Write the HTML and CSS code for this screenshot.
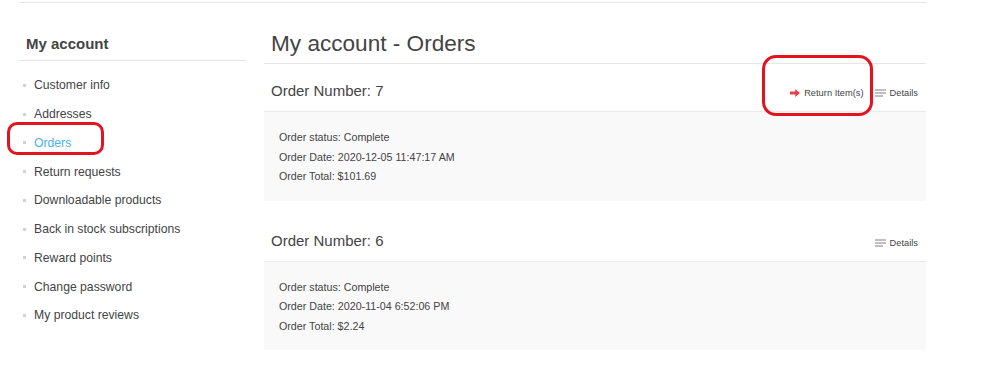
FILE: index.html
```html
<!DOCTYPE html>
<html lang="en">
<head>
    <meta charset="UTF-8">
    <title>My account - Orders</title>
    <link rel="stylesheet" href="styles.css">
</head>
<body>
    <div class="page">
        <div class="columns">
            <div class="side">
                <div class="side-title">My account</div>
                <ul class="side-list">
                    <li><a href="#">Customer info</a></li>
                    <li><a href="#">Addresses</a></li>
                    <li class="active"><a href="#">Orders</a></li>
                    <li><a href="#">Return requests</a></li>
                    <li><a href="#">Downloadable products</a></li>
                    <li><a href="#">Back in stock subscriptions</a></li>
                    <li><a href="#">Reward points</a></li>
                    <li><a href="#">Change password</a></li>
                    <li><a href="#">My product reviews</a></li>
                </ul>
            </div>
            <div class="main">
                <h1 class="page-title">My account - Orders</h1>

                <div class="order">
                    <div class="order-head">
                        <span class="order-num">Order Number: 7</span>
                        <div class="order-links">
                            <a href="#" class="return-link">
                                <svg width="10" height="8" viewBox="0 0 10 8"><path d="M0 2.6h5.2V0L10 4 5.2 8V5.4H0z" fill="#e8414a"/></svg>
                                Return Item(s)
                            </a>
                            <a href="#" class="details-link">
                                <svg width="11" height="8" viewBox="0 0 11 8"><path d="M0 1h11M0 4h11M0 7h8" stroke="#aaa" stroke-width="1.3" fill="none"/></svg>
                                Details
                            </a>
                        </div>
                    </div>
                    <div class="order-body">
                        <div>Order status: Complete</div>
                        <div>Order Date: 2020-12-05 11:47:17 AM</div>
                        <div>Order Total: $101.69</div>
                    </div>
                </div>

                <div class="order">
                    <div class="order-head">
                        <span class="order-num">Order Number: 6</span>
                        <div class="order-links">
                            <a href="#" class="details-link">
                                <svg width="11" height="8" viewBox="0 0 11 8"><path d="M0 1h11M0 4h11M0 7h8" stroke="#aaa" stroke-width="1.3" fill="none"/></svg>
                                Details
                            </a>
                        </div>
                    </div>
                    <div class="order-body">
                        <div>Order status: Complete</div>
                        <div>Order Date: 2020-11-04 6:52:06 PM</div>
                        <div>Order Total: $2.24</div>
                    </div>
                </div>
            </div>
        </div>
    </div>

    <!-- red annotation marks drawn over the screenshot -->
    <div class="mark mark-orders"></div>
    <div class="mark mark-return"></div>
</body>
</html>
```

FILE: styles.css
```css
body {
    margin: 0;
    font-family: "Liberation Sans", Arial, sans-serif;
    color: #444;
    background: #fff;
}

a {
    color: #444;
    text-decoration: none;
}

.page {
    width: 907px;
    margin-left: 19px;
    padding-top: 2px;
}

.columns {
    display: flex;
    gap: 18px;
    border-top: 1px solid #e6e6e6;
}

.side {
    width: 227px;
    flex-shrink: 0;
}

.side-title {
    padding: 31px 7px 6px;
    font-size: 15px;
    font-weight: bold;
    line-height: 20px;
    color: #444;
    border-bottom: 1px solid #e6e6e6;
}

.side-list {
    list-style: none;
    margin: 0;
    padding: 10px 0 0;
}

.side-list li {
    display: flex;
    align-items: center;
    gap: 8px;
    padding-left: 4px;
    height: 28.75px;
    font-size: 12.2px;
}

.side-list li::before {
    content: "";
    width: 3px;
    height: 3px;
    background: #d3d3d3;
}

.side-list li.active a {
    color: #4ab2f1;
}

.main {
    flex: 1;
}

.page-title {
    margin: 0;
    padding: 27px 7px 5px;
    font-size: 22.6px;
    font-weight: normal;
    line-height: 28px;
    color: #444;
    border-bottom: 1px solid #e6e6e6;
}

.order + .order {
    margin-top: 13px;
}

.order-head {
    display: flex;
    justify-content: space-between;
    align-items: flex-end;
    padding: 18px 8px 11px 7px;
    border-bottom: 1px solid #e9e9e9;
}

.order-num {
    font-size: 15px;
    line-height: 18px;
}

.order-links {
    display: flex;
    gap: 11px;
    font-size: 9.3px;
    line-height: 14px;
}

.order-links a {
    display: flex;
    align-items: center;
    gap: 4px;
}

.details-link {
    gap: 3px;
}

.order-body {
    background: #f9f9f9;
    padding: 16px 15px 14px;
    font-size: 10.7px;
    line-height: 19.5px;
}

.mark {
    position: absolute;
    border: 3px solid #e3141e;
    border-radius: 12px;
}

.mark-orders {
    left: 7px;
    top: 122px;
    width: 91px;
    height: 27px;
    border-radius: 10px;
}

.mark-return {
    left: 762px;
    top: 55px;
    width: 105px;
    height: 55px;
    border-radius: 14px;
}
```
